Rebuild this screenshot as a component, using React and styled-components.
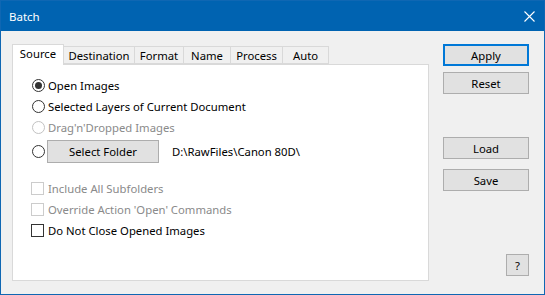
import styled, { createGlobalStyle } from "styled-components";

const GlobalStyle = createGlobalStyle`
  html, body {
    margin: 0;
    padding: 0;
    background: #f0f0f0;
  }
  body {
    font-family: "Noto Sans", "Segoe UI", sans-serif;
    font-size: 11.3px;
    color: #000;
  }
`;

const Window = styled.div`
  width: 545px;
  height: 295px;
  box-sizing: border-box;
  border: 1px solid #0f67b3;
  background: #f0f0f0;
  display: flex;
  flex-direction: column;
`;

const TitleBar = styled.div`
  height: 30px;
  background: #0063b1;
  color: #fff;
  display: flex;
  align-items: center;
  justify-content: space-between;
  padding-left: 8px;
`;

const Title = styled.span`
  font-size: 11.5px;
`;

const CloseButton = styled.div`
  width: 30px;
  height: 30px;
  display: flex;
  align-items: center;
  justify-content: center;
`;

const Body = styled.div`
  flex: 1;
  display: flex;
  padding: 13px 15px 0 11px;
`;

const TabsArea = styled.div`
  width: 417px;
  display: flex;
  flex-direction: column;
`;

const TabStrip = styled.div`
  height: 20px;
  display: flex;
  align-items: flex-end;
`;

const Tab = styled.div`
  position: relative;
  z-index: ${(p) => (p.$active ? 2 : 1)};
  box-sizing: border-box;
  width: ${(p) => p.$width}px;
  height: ${(p) => (p.$active ? 21 : 18)}px;
  margin-bottom: ${(p) => (p.$active ? -1 : 0)}px;
  margin-left: -1px;
  border: 1px solid #d9d9d9;
  border-bottom: ${(p) => (p.$active ? "none" : "1px solid #d9d9d9")};
  background: ${(p) => (p.$active ? "#fff" : "#f0f0f0")};
  display: flex;
  align-items: ${(p) => (p.$active ? "flex-start" : "center")};
  padding-top: ${(p) => (p.$active ? 1 : 0)}px;
  justify-content: center;
  &:first-child {
    margin-left: 0;
  }
`;

const Panel = styled.div`
  height: 217px;
  box-sizing: border-box;
  border: 1px solid #d9d9d9;
  background: #fff;
  padding: 10px 0 0 19px;
  display: flex;
  flex-direction: column;
`;

const Row = styled.div`
  height: 21px;
  display: flex;
  align-items: center;
  color: ${(p) => (p.$disabled ? "#8a8a8a" : "#000")};
`;

const FolderRow = styled(Row)`
  height: 23px;
  margin-top: 2px;
  margin-bottom: 15px;
`;

const Radio = styled.span`
  width: 13px;
  height: 13px;
  box-sizing: border-box;
  border-radius: 50%;
  border: 1px solid ${(p) => (p.$disabled ? "#c2c2c2" : "#333")};
  background: #fff;
  display: flex;
  align-items: center;
  justify-content: center;
  margin-right: ${(p) => p.$gap ?? 3}px;
  flex-shrink: 0;
  &::after {
    content: "";
    display: ${(p) => (p.$checked ? "block" : "none")};
    width: 7px;
    height: 7px;
    border-radius: 50%;
    background: #333;
  }
`;

const Checkbox = styled.span`
  width: 13px;
  height: 13px;
  box-sizing: border-box;
  margin-left: -1px;
  border: 1px solid ${(p) => (p.$disabled ? "#cccccc" : "#333")};
  background: #fff;
  margin-right: 4px;
  flex-shrink: 0;
`;

const FolderButton = styled.div`
  width: 112px;
  height: 23px;
  box-sizing: border-box;
  border: 1px solid #adadad;
  background: #e1e1e1;
  display: flex;
  align-items: center;
  justify-content: center;
`;

const Path = styled.span`
  margin-left: 13px;
`;

const ButtonColumn = styled.div`
  width: 86px;
  margin-left: 14px;
  display: flex;
  flex-direction: column;
`;

const Button = styled.div`
  height: 22px;
  box-sizing: border-box;
  border: ${(p) => (p.$primary ? "2px solid #0078d7" : "1px solid #adadad")};
  background: #e1e1e1;
  display: flex;
  align-items: center;
  justify-content: center;
  margin-top: ${(p) => p.$top ?? 0}px;
`;

const HelpButton = styled(Button)`
  width: 23px;
  align-self: flex-end;
  margin-top: auto;
  margin-bottom: 18px;
`;

const tabs = [
  ["Source", 52],
  ["Destination", 72],
  ["Format", 50],
  ["Name", 48],
  ["Process", 53],
  ["Auto", 47],
];

export default function App() {
  return (
    <>
      <GlobalStyle />
      <Window>
        <TitleBar>
          <Title>Batch</Title>
          <CloseButton>
            <svg width="11" height="11" viewBox="0 0 11 11">
              <path d="M0.5 0.5 L10.5 10.5 M10.5 0.5 L0.5 10.5" stroke="#fff" strokeWidth="1.1" />
            </svg>
          </CloseButton>
        </TitleBar>
        <Body>
          <TabsArea>
            <TabStrip>
              {tabs.map(([label, w], i) => (
                <Tab key={label} $width={w} $active={i === 0}>
                  {label}
                </Tab>
              ))}
            </TabStrip>
            <Panel>
              <Row>
                <Radio $checked />
                Open Images
              </Row>
              <Row>
                <Radio />
                Selected Layers of Current Document
              </Row>
              <Row $disabled>
                <Radio $disabled />
                Drag'n'Dropped Images
              </Row>
              <FolderRow>
                <Radio $gap={2} />
                <FolderButton>Select Folder</FolderButton>
                <Path>D:\RawFiles\Canon 80D\</Path>
              </FolderRow>
              <Row $disabled>
                <Checkbox $disabled />
                Include All Subfolders
              </Row>
              <Row $disabled>
                <Checkbox $disabled />
                Override Action 'Open' Commands
              </Row>
              <Row>
                <Checkbox />
                Do Not Close Opened Images
              </Row>
            </Panel>
          </TabsArea>
          <ButtonColumn>
            <Button $primary>Apply</Button>
            <Button $top={6}>Reset</Button>
            <Button $top={43}>Load</Button>
            <Button $top={10}>Save</Button>
            <HelpButton>?</HelpButton>
          </ButtonColumn>
        </Body>
      </Window>
    </>
  );
}
